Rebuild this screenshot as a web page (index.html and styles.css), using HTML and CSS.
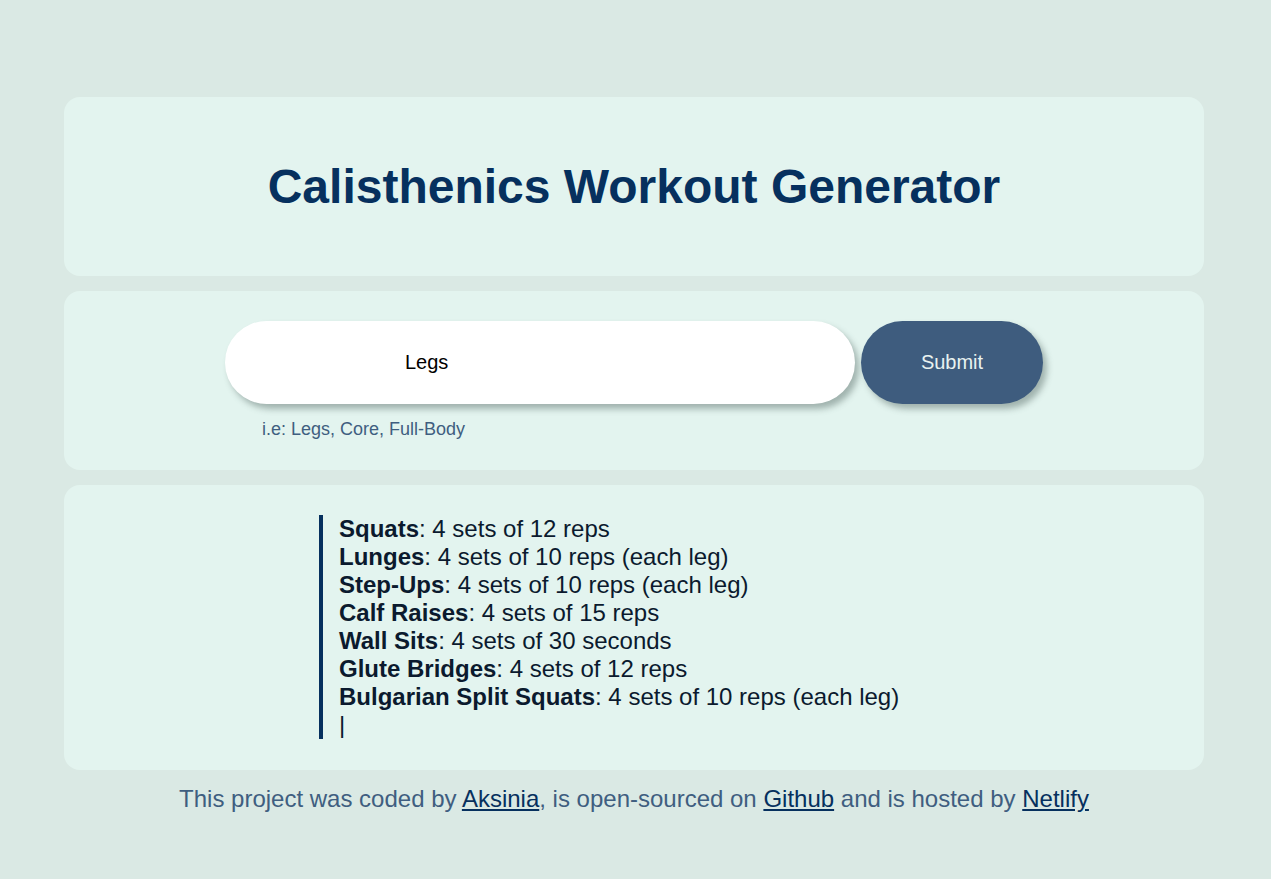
FILE: index.html
```html
<!DOCTYPE html>
<html lang="en">
<head>
    <meta charset="UTF-8">
    <meta name="viewport" content="width=device-width, initial-scale=1.0">
    <title>Calisthenics Workout Generator</title>
    <link rel="stylesheet" href="styles.css">
</head>
<body>
    <div class="container">
        <header class="card header">
            <h1 class="title">Calisthenics Workout Generator</h1>
        </header>

        <section class="card form-card">
            <form class="workout-form">
                <div class="form-row">
                    <input type="text" class="search-input" value="Legs">
                    <button type="button" class="submit-button">Submit</button>
                </div>
                <p class="hint">i.e: Legs, Core, Full-Body</p>
            </form>
        </section>

        <section class="card result-card">
            <blockquote class="workout">
                <strong>Squats</strong>: 4 sets of 12 reps<br>
                <strong>Lunges</strong>: 4 sets of 10 reps (each leg)<br>
                <strong>Step-Ups</strong>: 4 sets of 10 reps (each leg)<br>
                <strong>Calf Raises</strong>: 4 sets of 15 reps<br>
                <strong>Wall Sits</strong>: 4 sets of 30 seconds<br>
                <strong>Glute Bridges</strong>: 4 sets of 12 reps<br>
                <strong>Bulgarian Split Squats</strong>: 4 sets of 10 reps (each leg)<br>
                <span class="cursor">|</span>
            </blockquote>
        </section>

        <footer class="footer">
            This project was coded by <a href="#">Aksinia</a>, is open-sourced on <a href="#">Github</a> and is hosted by <a href="#">Netlify</a>
        </footer>
    </div>
</body>
</html>
```

FILE: styles.css
```css
body {
    background: #dae9e4;
    font-family: 'Liberation Sans', Arial, sans-serif;
    margin: 0;
    padding: 97px 3px 40px 0;
}

.container {
    width: 1140px;
    margin: 0 auto;
}

.card {
    background-color: #e3f4ef;
    border-radius: 16px;
    margin-bottom: 15px;
}

.header {
    height: 179px;
    display: flex;
    align-items: center;
    justify-content: center;
}

.title {
    margin: 0;
    color: #06305e;
    font-size: 48px;
    font-weight: bold;
}

.form-card {
    height: 179px;
    box-sizing: border-box;
    padding-top: 30px;
}

.workout-form {
    width: 818px;
    margin: 0 auto;
}

.form-row {
    display: flex;
    gap: 6px;
}

.search-input {
    width: 630px;
    height: 83px;
    box-sizing: border-box;
    border: none;
    border-radius: 42px;
    background: #ffffff;
    padding: 0 0 0 180px;
    font-family: 'Liberation Sans', Arial, sans-serif;
    font-size: 20px;
    color: #000000;
    box-shadow: 4px 5px 6px rgba(80, 100, 95, 0.45);
    outline: none;
}

.submit-button {
    width: 182px;
    height: 83px;
    border: none;
    border-radius: 42px;
    background-color: #3e5c7e;
    color: #e8f2f0;
    font-family: 'Liberation Sans', Arial, sans-serif;
    font-size: 20px;
    box-shadow: 4px 5px 6px rgba(80, 100, 95, 0.45);
    cursor: pointer;
}

.hint {
    margin: 15px 0 0 37px;
    font-size: 18px;
    color: #3f5e80;
}

.result-card {
    padding: 30px 0 31px 255px;
}

.workout {
    margin: 0;
    border-left: 4px solid #06305e;
    padding-left: 16px;
    font-size: 24px;
    line-height: 28px;
    color: #0b1a2e;
}

.cursor {
    font-weight: normal;
}

.footer {
    text-align: center;
    font-size: 24px;
    color: #3f5e80;
}

.footer a {
    color: #06305e;
}
```
